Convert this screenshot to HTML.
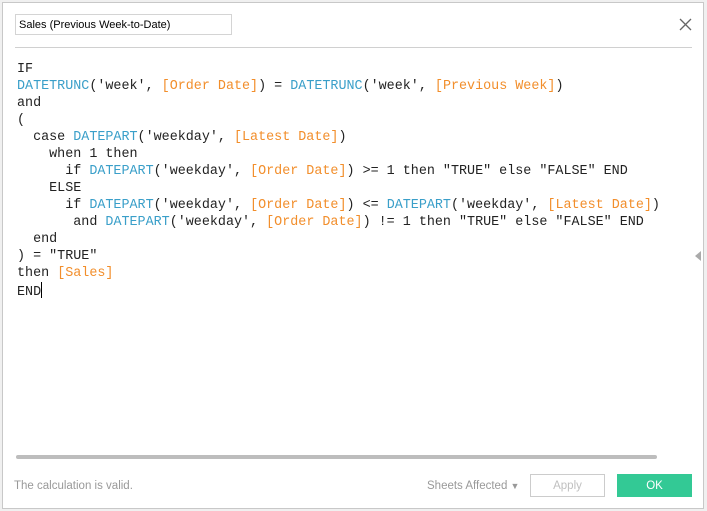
<!DOCTYPE html>
<html><head><style>
body{margin:0;width:707px;height:511px;background:#f0f0f0;position:relative;overflow:hidden;font-family:"Liberation Sans",sans-serif}
.frame{position:absolute;left:2px;top:2px;width:700px;height:505px;background:#fff;border:1px solid #c8c8c8}
.title{position:absolute;left:15px;top:14px;width:212px;height:19px;border:1px solid #d4d4d4;font-size:11px;line-height:21px;padding-left:3px;color:#000}
.sep{position:absolute;left:15px;top:47px;width:677px;height:1px;background:#d0d0d0}
pre{position:absolute;left:17px;top:61px;margin:0;font-family:"Liberation Mono",monospace;font-size:13.4px;line-height:17px;color:#222}
.b{color:#3a9fc9}.o{color:#f28e2b}
.cur{display:inline-block;width:1px;height:16px;background:#000;vertical-align:-3px}
.sb{position:absolute;left:16px;top:455px;width:641px;height:4px;border-radius:2px;background:#bdbdbd}
.st{position:absolute;left:14px;top:480px;font-size:11.5px;color:#999}
.sa{position:absolute;left:427px;top:480px;font-size:11.5px;color:#999}
.apply{position:absolute;left:530px;top:474px;width:73px;height:21px;border:1px solid #ccc;font-size:11.5px;color:#c0c0c0;text-align:center;line-height:23px}
.ok{position:absolute;left:617px;top:474px;width:75px;height:23px;background:#33c995;color:#fff;font-size:11.5px;text-align:center;line-height:25px}
</style></head><body>
<div class="frame"></div>
<div class="title">Sales (Previous Week-to-Date)</div>
<svg style="position:absolute;left:679px;top:18px" width="13" height="13"><path d="M1 1L12 12M12 1L1 12" stroke="#666" stroke-width="1.3"/></svg>
<div class="sep"></div>
<pre>IF
<span class="b">DATETRUNC</span>('week', <span class="o">[Order Date]</span>) = <span class="b">DATETRUNC</span>('week', <span class="o">[Previous Week]</span>)
and
(
  case <span class="b">DATEPART</span>('weekday', <span class="o">[Latest Date]</span>)
    when 1 then
      if <span class="b">DATEPART</span>('weekday', <span class="o">[Order Date]</span>) &gt;= 1 then "TRUE" else "FALSE" END
    ELSE
      if <span class="b">DATEPART</span>('weekday', <span class="o">[Order Date]</span>) &lt;= <span class="b">DATEPART</span>('weekday', <span class="o">[Latest Date]</span>)
       and <span class="b">DATEPART</span>('weekday', <span class="o">[Order Date]</span>) != 1 then "TRUE" else "FALSE" END
  end
) = "TRUE"
then <span class="o">[Sales]</span>
END<span class="cur"></span></pre>
<svg style="position:absolute;left:695px;top:251px" width="7" height="10"><path d="M6 0L0 5L6 10Z" fill="#aaa"/></svg>
<div class="sb"></div>
<div class="st">The calculation is valid.</div>
<div class="sa">Sheets Affected <span style="font-size:9px">▼</span></div>
<div class="apply">Apply</div>
<div class="ok">OK</div>
</body></html>
